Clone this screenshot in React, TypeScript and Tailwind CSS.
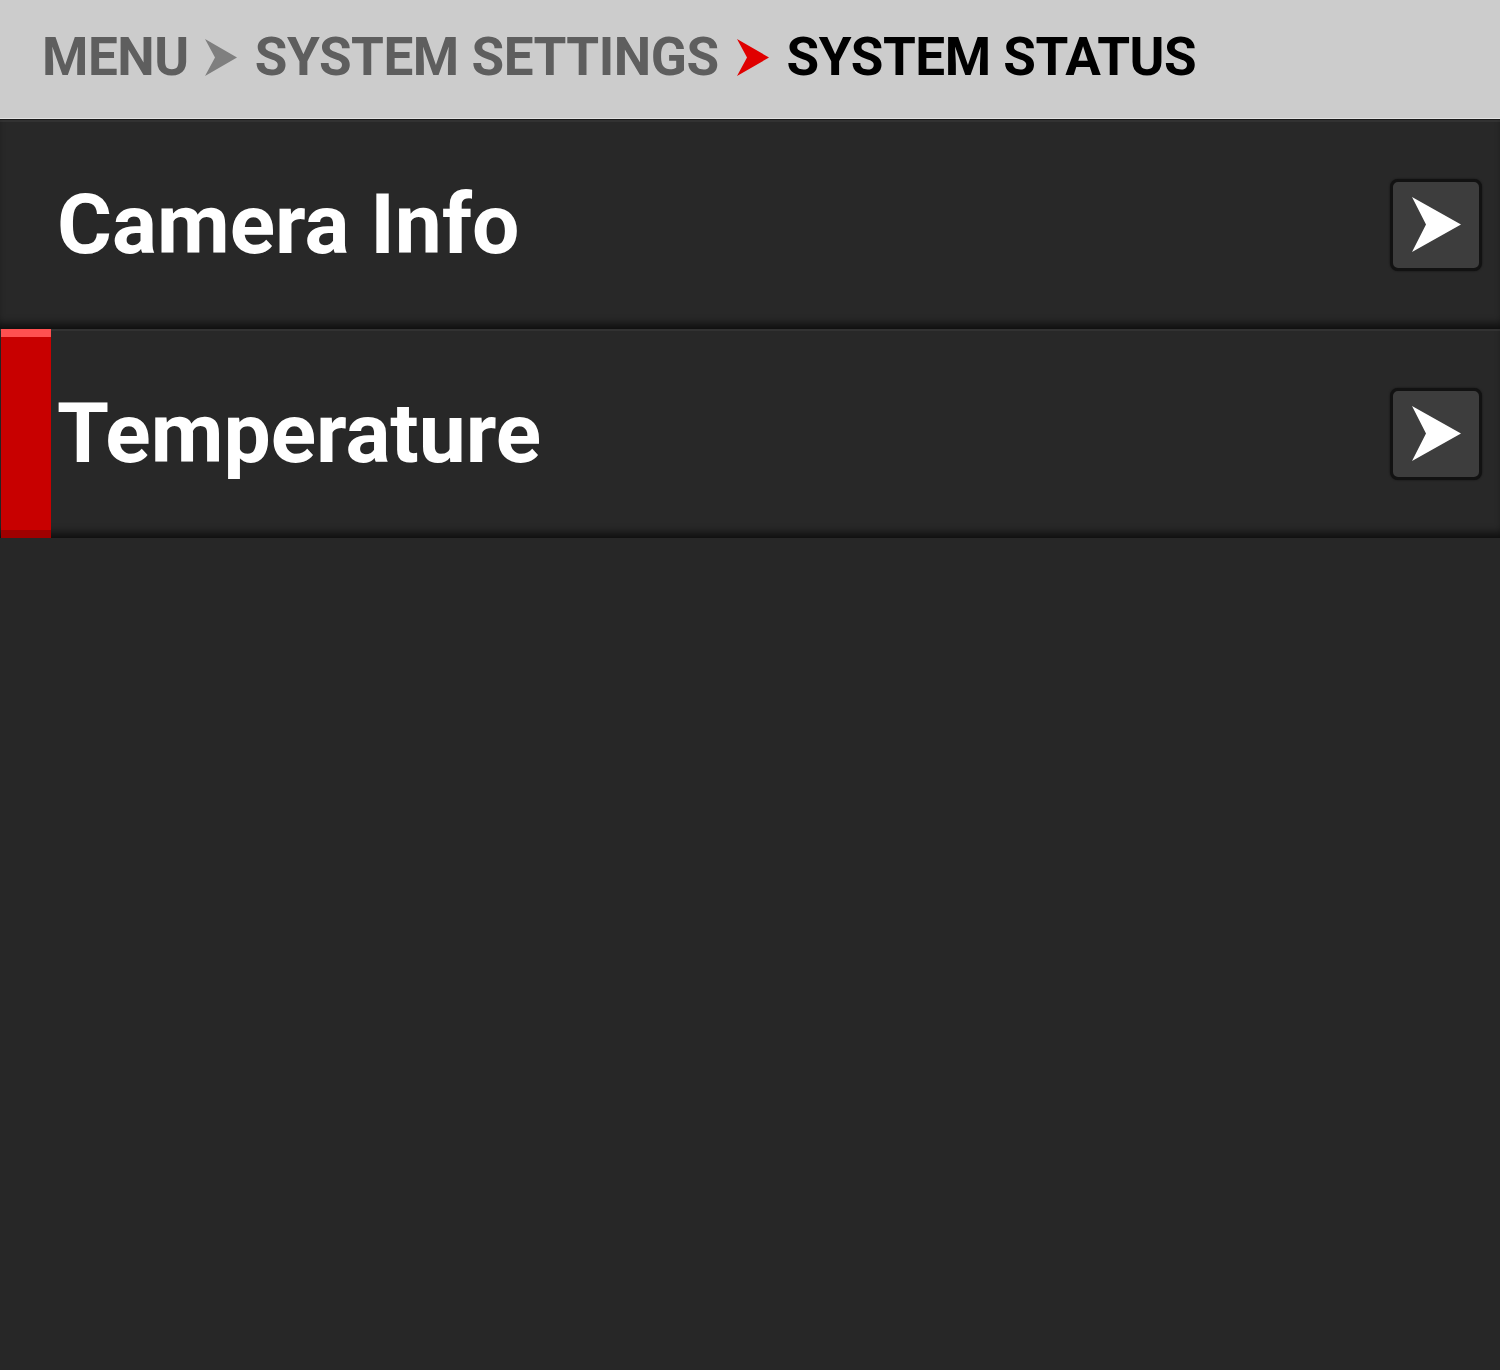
import React from "react";

const font = { fontFamily: "Roboto, 'Liberation Sans', sans-serif" };

function Crumb({ color }: { color: string }) {
  return (
    <svg width="32" height="37" viewBox="0 0 32 37" className="shrink-0">
      <polygon points="0,0 32,18.5 0,37 10,18.5" fill={color} />
    </svg>
  );
}

function ArrowButton() {
  return (
    <div className="w-[92px] h-[92px] shrink-0 rounded-[8px] border-[3px] border-[#121212] bg-[#3d3d3d] flex items-center justify-center shadow-[0_0_2px_rgba(0,0,0,0.6)]">
      <svg width="49" height="55" viewBox="0 0 49 55">
        <polygon points="0,0 49,27.5 0,55 14,27.5" fill="#ffffff" />
      </svg>
    </div>
  );
}

function Row({ label, selected }: { label: string; selected?: boolean }) {
  return (
    <div className="relative h-[209px] flex items-center bg-[#282828] shadow-[inset_0_2px_0_rgba(255,255,255,0.05),inset_0_-9px_8px_-4px_rgba(0,0,0,0.65)]">
      {selected && (
        <div className="absolute left-[1px] top-0 bottom-0 w-[50px] flex flex-col">
          <div className="h-[8px] bg-[#ff5050]" />
          <div className="flex-1 bg-[#c80000]" />
          <div className="h-[8px] bg-[#a00000]" />
        </div>
      )}
      <div
        className="flex-1 pl-[57px] text-white font-bold text-[84px] leading-none"
        style={font}
      >
        {label}
      </div>
      <div className="pr-[18px]">
        <ArrowButton />
      </div>
    </div>
  );
}

export default function App() {
  return (
    <div className="w-[1500px] h-[1370px] bg-[#272727] overflow-hidden" style={font}>
      <div className="h-[120px] bg-[#cccccc] border-b border-[#1a1a1a] shadow-[inset_0_-1px_0_#e2e2e2] flex items-center pl-[42px] pb-[5px] font-bold text-[53px] leading-none tracking-[-0.45px]">
        <span className="text-[#5e5e5e]">MENU</span>
        <span className="ml-[16px] mr-[18px] flex items-center">
          <Crumb color="#7f7f7f" />
        </span>
        <span className="text-[#5e5e5e]">SYSTEM SETTINGS</span>
        <span className="ml-[18px] mr-[18px] flex items-center">
          <Crumb color="#e00000" />
        </span>
        <span className="text-black">SYSTEM STATUS</span>
      </div>
      <Row label="Camera Info" />
      <Row label="Temperature" selected />
    </div>
  );
}
